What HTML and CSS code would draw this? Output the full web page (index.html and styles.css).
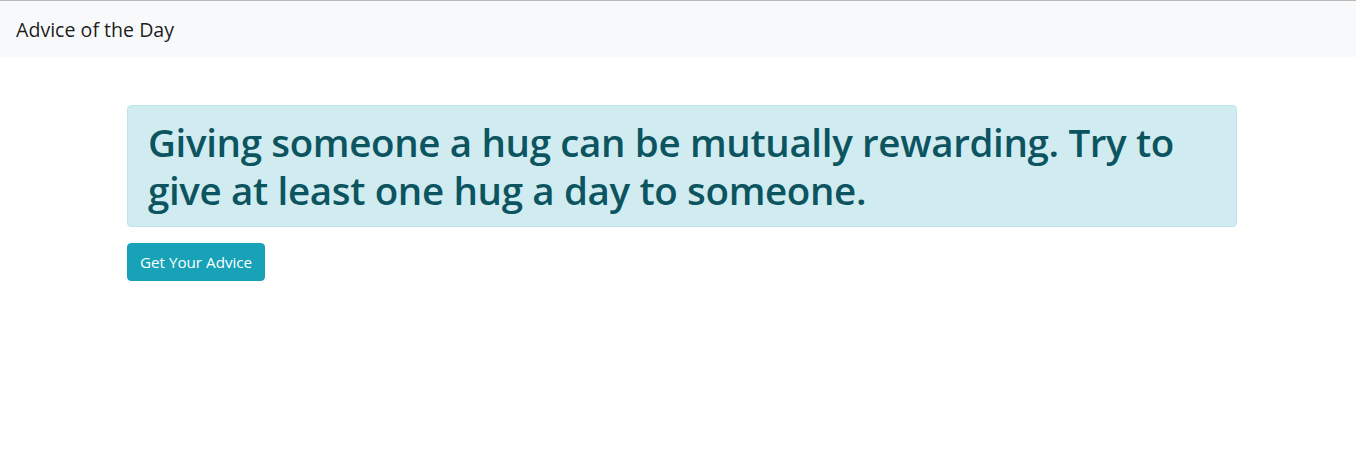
FILE: index.html
```html
<!DOCTYPE html>
<html lang="en">
<head>
<meta charset="utf-8">
<title>Advice of the Day</title>
<link rel="stylesheet" href="styles.css">
</head>
<body>
<nav class="navbar">
  <span class="brand">Advice of the Day</span>
</nav>
<main class="container">
  <div class="alert">
    <h1 class="advice">Giving someone a hug can be mutually rewarding. Try to give at least one hug a day to someone.</h1>
  </div>
  <button class="btn" type="button">Get Your Advice</button>
</main>
</body>
</html>
```

FILE: styles.css
```css
* { box-sizing: border-box; }
html, body { margin: 0; padding: 0; }
body {
  font-family: "Open Sans", "Noto Sans", sans-serif;
  color: #212529;
  background: #fff;
  border-top: 1px solid #b9b9b9;
}
.navbar {
  background: #f8f9fa;
  padding: 8px 16px;
  height: 56px;
  display: flex;
  align-items: center;
}
.brand {
  font-size: 19.6px;
  line-height: 30px;
  color: rgba(0,0,0,.9);
  font-weight: 500;
  padding-top: 2px;
}
.container {
  width: 1110px;
  margin: 48px 0 0 127px;
}
.alert {
  background: #d1ecf1;
  border: 1px solid #bee5eb;
  color: #0c5460;
  border-radius: 4px;
  padding: 12px 20px;
  margin-bottom: 16px;
}
.advice {
  margin: 0;
  font-size: 38.5px;
  font-weight: 600;
  line-height: 48px;
  letter-spacing: -0.35px;
}
.btn {
  font-family: inherit;
  background: #17a2b8;
  border: 1px solid #17a2b8;
  color: #fff;
  font-size: 15.2px;
  line-height: 24px;
  height: 38px;
  padding: 6px 12px;
  border-radius: 4px;
  white-space: nowrap;
}
```
